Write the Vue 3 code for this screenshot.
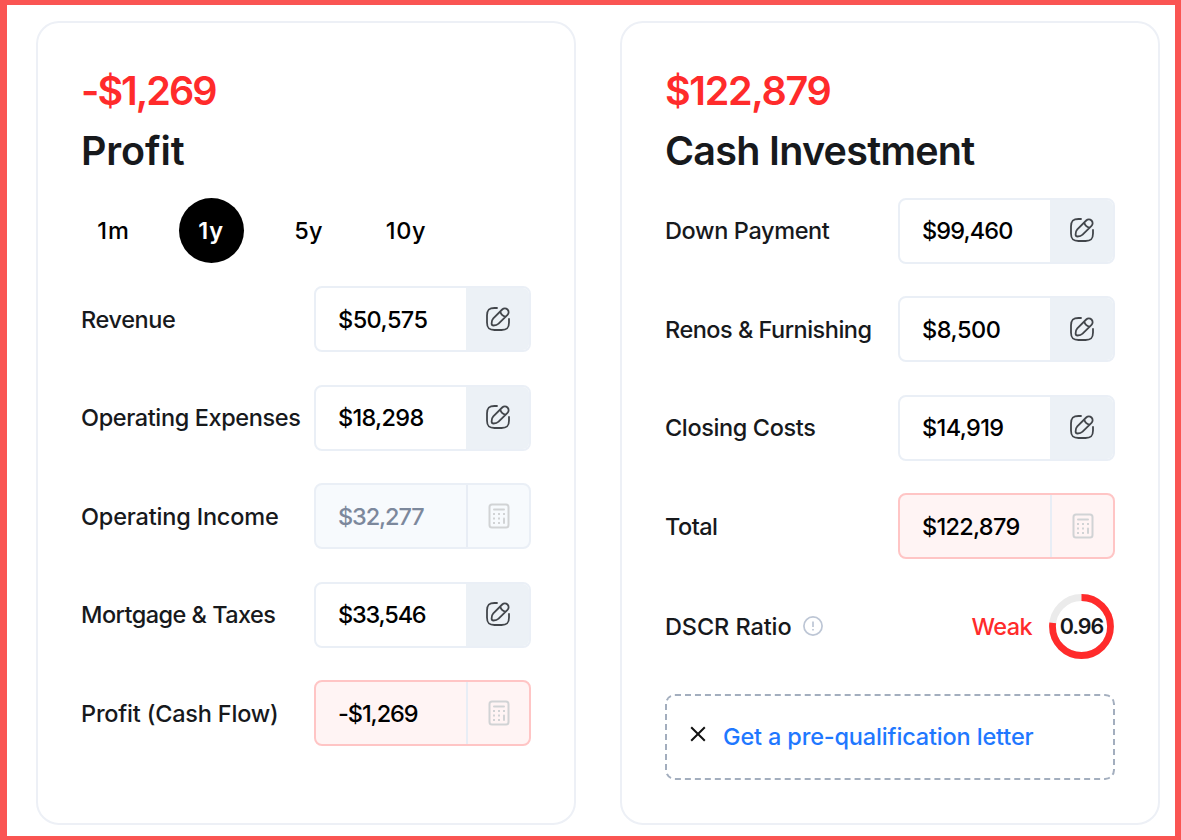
<template>
  <div class="marco">
    <!-- Tarjeta de beneficio -->
    <section class="tarjeta">
      <h2 class="importe"><span v-ajuste="134">-$1,269</span></h2>
      <h2 class="titulo"><span v-ajuste="103">Profit</span></h2>

      <!-- Selector de periodo -->
      <div class="periodos">
        <button
          v-for="p in periodos"
          :key="p.texto"
          class="periodo"
          :class="{ activo: p.texto === periodo }"
          @click="periodo = p.texto"
        >
          <span v-ajuste="p.ancho">{{ p.texto }}</span>
        </button>
      </div>

      <div class="filas">
        <div v-for="f in beneficio" :key="f.nombre" class="fila">
          <span class="nombre"><span v-ajuste="f.ancho">{{ f.nombre }}</span></span>
          <div class="campo" :class="f.tipo">
            <span class="valor"><span v-ajuste="f.anchoValor">{{ f.valor }}</span></span>
            <span class="accion">
              <svg v-if="f.tipo === 'editable'" class="editar" viewBox="0 0 24 24">
                <path d="M11 1H8.500C3 1 1 3 1 8.500V15.500C1 21 3 23 8.500 23H15.500C21 23 23 21 23 15.500V12" />
                <path d="M16.200 2.500 7.300 11.400C6 12.700 5.600 14.800 5.600 16.500C5.600 18 6.100 18.500 7.600 18.500C9.200 18.500 11.200 18 12.600 16.700L21.500 7.800C23 6.300 23 4 21.500 2.500C20 1 17.700 1 16.200 2.500ZM14.300 4.400C14.800 7 17 9.200 19.600 9.700" />
              </svg>
              <svg v-else class="calculadora" viewBox="0 0 22 26">
                <rect x="1.500" y="1.500" width="19" height="23" rx="2.500" />
                <path d="M6 6.500H16" />
                <path class="puntos" d="M5 11H7M10 11H12M15 11H17M5 15.500H7M10 15.500H12M5 20H7M10 20H12" />
                <path d="M16 15.500V20" />
              </svg>
            </span>
          </div>
        </div>
      </div>
    </section>

    <!-- Tarjeta de inversión -->
    <section class="tarjeta">
      <h2 class="importe"><span v-ajuste="165">$122,879</span></h2>
      <h2 class="titulo"><span v-ajuste="309">Cash Investment</span></h2>

      <div class="filas inversion">
        <div v-for="f in inversion" :key="f.nombre" class="fila">
          <span class="nombre"><span v-ajuste="f.ancho">{{ f.nombre }}</span></span>
          <div class="campo" :class="f.tipo">
            <span class="valor"><span v-ajuste="f.anchoValor">{{ f.valor }}</span></span>
            <span class="accion">
              <svg v-if="f.tipo === 'editable'" class="editar" viewBox="0 0 24 24">
                <path d="M11 1H8.500C3 1 1 3 1 8.500V15.500C1 21 3 23 8.500 23H15.500C21 23 23 21 23 15.500V12" />
                <path d="M16.200 2.500 7.300 11.400C6 12.700 5.600 14.800 5.600 16.500C5.600 18 6.100 18.500 7.600 18.500C9.200 18.500 11.200 18 12.600 16.700L21.500 7.800C23 6.300 23 4 21.500 2.500C20 1 17.700 1 16.200 2.500ZM14.300 4.400C14.800 7 17 9.200 19.600 9.700" />
              </svg>
              <svg v-else class="calculadora" viewBox="0 0 22 26">
                <rect x="1.500" y="1.500" width="19" height="23" rx="2.500" />
                <path d="M6 6.500H16" />
                <path class="puntos" d="M5 11H7M10 11H12M15 11H17M5 15.500H7M10 15.500H12M5 20H7M10 20H12" />
                <path d="M16 15.500V20" />
              </svg>
            </span>
          </div>
        </div>
      </div>

      <!-- Ratio DSCR con su anillo -->
      <div class="ratio">
        <span class="nombre"><span v-ajuste="126">DSCR Ratio</span></span>
        <svg class="info" viewBox="0 0 20 20">
          <circle cx="10" cy="10" r="9.100" />
          <path d="M10 5.500V11M10 13V14.600" />
        </svg>
        <span class="estado"><span v-ajuste="60">Weak</span></span>
        <div class="anillo">
          <svg viewBox="0 0 65 65">
            <circle class="pista" cx="32.500" cy="32.500" r="29" />
            <circle class="arco" cx="32.500" cy="32.500" r="29" pathLength="100" stroke-dasharray="77 100" />
          </svg>
          <span class="cifra"><span v-ajuste="43">0.96</span></span>
        </div>
      </div>

      <div class="carta">
        <svg class="cerrar" viewBox="0 0 16 16">
          <path d="M1.200 1.200 14.800 14.800M14.800 1.200 1.200 14.800" />
        </svg>
        <a class="enlace"><span v-ajuste="310">Get a pre-qualification letter</span></a>
      </div>
    </section>
  </div>
</template>

<script setup>
import { ref } from 'vue'

// Reparte el espacio entre letras para que el texto ocupe el ancho indicado
const vAjuste = {
  mounted(el, { value }) {
    const letras = el.textContent.length
    const natural = el.getBoundingClientRect().width
    el.style.letterSpacing = `${(value + 0.5 - natural) / letras}px`
  }
}

const periodo = ref('1y')

const periodos = [
  { texto: '1m', ancho: 32 },
  { texto: '1y', ancho: 25 },
  { texto: '5y', ancho: 28 },
  { texto: '10y', ancho: 40 }
]

const beneficio = [
  { nombre: 'Revenue', ancho: 94, valor: '$50,575', anchoValor: 89, tipo: 'editable' },
  { nombre: 'Operating Expenses', ancho: 219, valor: '$18,298', anchoValor: 85, tipo: 'editable' },
  { nombre: 'Operating Income', ancho: 197, valor: '$32,277', anchoValor: 85, tipo: 'calculado' },
  { nombre: 'Mortgage & Taxes', ancho: 194, valor: '$33,546', anchoValor: 87, tipo: 'editable' },
  { nombre: 'Profit (Cash Flow)', ancho: 197, valor: '-$1,269', anchoValor: 79, tipo: 'negativo' }
]

const inversion = [
  { nombre: 'Down Payment', ancho: 164, valor: '$99,460', anchoValor: 90, tipo: 'editable' },
  { nombre: 'Renos & Furnishing', ancho: 206, valor: '$8,500', anchoValor: 78, tipo: 'editable' },
  { nombre: 'Closing Costs', ancho: 150, valor: '$14,919', anchoValor: 81, tipo: 'editable' },
  { nombre: 'Total', ancho: 52, valor: '$122,879', anchoValor: 97, tipo: 'negativo' }
]
</script>

<style>
body {
  margin: 0;
  background: #fff;
}
</style>

<style scoped>
.marco {
  box-sizing: border-box;
  width: 1181px;
  height: 840px;
  display: flex;
  gap: 44px;
  padding: 16px 14px 11px 29px;
  border: solid #fa5553;
  border-width: 5px 6px 4px 7px;
  background: #fff;
  color: #17191c;
  font-family: Inter, "Liberation Sans", sans-serif;
  font-size: 23.5px;
  font-weight: 500;
  overflow: hidden;
}

.tarjeta {
  box-sizing: border-box;
  width: 540px;
  height: 804px;
  padding: 38px 43px 0;
  border: 2px solid #edf0f6;
  border-radius: 23px;
}

.importe,
.titulo {
  margin: 0;
  height: 60px;
  line-height: 60px;
  font-size: 39.5px;
  font-weight: 620;
  white-space: nowrap;
}

.importe { color: #ff2b2b; }

.periodos {
  display: flex;
  gap: 32.5px;
  margin-top: 17px;
}

.periodo {
  width: 65px;
  height: 65px;
  padding: 0;
  border: none;
  border-radius: 50%;
  background: none;
  color: #000;
  font: inherit;
  cursor: pointer;
}

.periodo.activo {
  background: #000;
  color: #fff;
  font-weight: 600;
}

.filas {
  display: flex;
  flex-direction: column;
  gap: 33.5px;
  margin-top: 23.5px;
}

.inversion { margin-top: 17px; }

.fila {
  display: flex;
  align-items: center;
  justify-content: space-between;
  height: 65px;
}

.nombre { white-space: nowrap; }

.campo {
  box-sizing: border-box;
  display: flex;
  width: 217px;
  height: 66px;
  flex: none;
  border: 2px solid #eaeff6;
  border-radius: 8px;
  overflow: hidden;
  color: #000;
}

.valor {
  flex: 1;
  display: flex;
  align-items: center;
  padding-left: 22px;
  white-space: nowrap;
}

.accion {
  box-sizing: border-box;
  width: 63px;
  display: flex;
  align-items: center;
  justify-content: center;
}

.editable .accion { background: #ecf1f6; }

.calculado {
  background: #f7fafd;
  color: #7c889c;
}

.negativo {
  background: #fff4f4;
  border-color: #ffc5c5;
}

.calculado .accion,
.negativo .accion { border-left: 2px solid #e8edf5; }

.editar {
  width: 24px;
  height: 24px;
  margin: 0 0 1px;
  fill: none;
  stroke: #42464b;
  stroke-width: 1.8;
  stroke-linecap: round;
  stroke-linejoin: round;
  overflow: visible;
}

.calculadora {
  width: 22px;
  height: 26px;
  fill: none;
  stroke: #d1d3d5;
  stroke-width: 2;
  stroke-linecap: round;
}

.calculadora .puntos { stroke-linecap: butt; }

.ratio {
  display: flex;
  align-items: center;
  height: 65px;
  margin-top: 35px;
  padding-right: 1px;
}

.info {
  width: 20px;
  height: 20px;
  margin-left: 11px;
  fill: none;
  stroke: #bdc6d5;
  stroke-width: 1.7;
}

.estado {
  margin-left: auto;
  color: #ff2b2b;
}

.anillo {
  position: relative;
  width: 65px;
  height: 65px;
  margin-left: 17px;
}

.anillo svg {
  display: block;
  transform: rotate(-90deg);
}

.anillo circle {
  fill: none;
  stroke-width: 6.8;
}

.pista { stroke: #ebebeb; }
.arco { stroke: #ff2b2b; }

.cifra {
  position: absolute;
  inset: 0;
  display: flex;
  align-items: center;
  justify-content: center;
  font-size: 21.5px;
  font-weight: 600;
}

.carta {
  box-sizing: border-box;
  display: flex;
  align-items: center;
  height: 86px;
  margin-top: 35px;
  padding-left: 23px;
  border: 2px dashed #a3aebe;
  border-radius: 10px;
}

.cerrar {
  width: 16px;
  height: 16px;
  margin: 0 17px 6px 0;
  fill: none;
  stroke: #111;
  stroke-width: 2;
}

.enlace {
  color: #1f78ff;
  white-space: nowrap;
}
</style>
